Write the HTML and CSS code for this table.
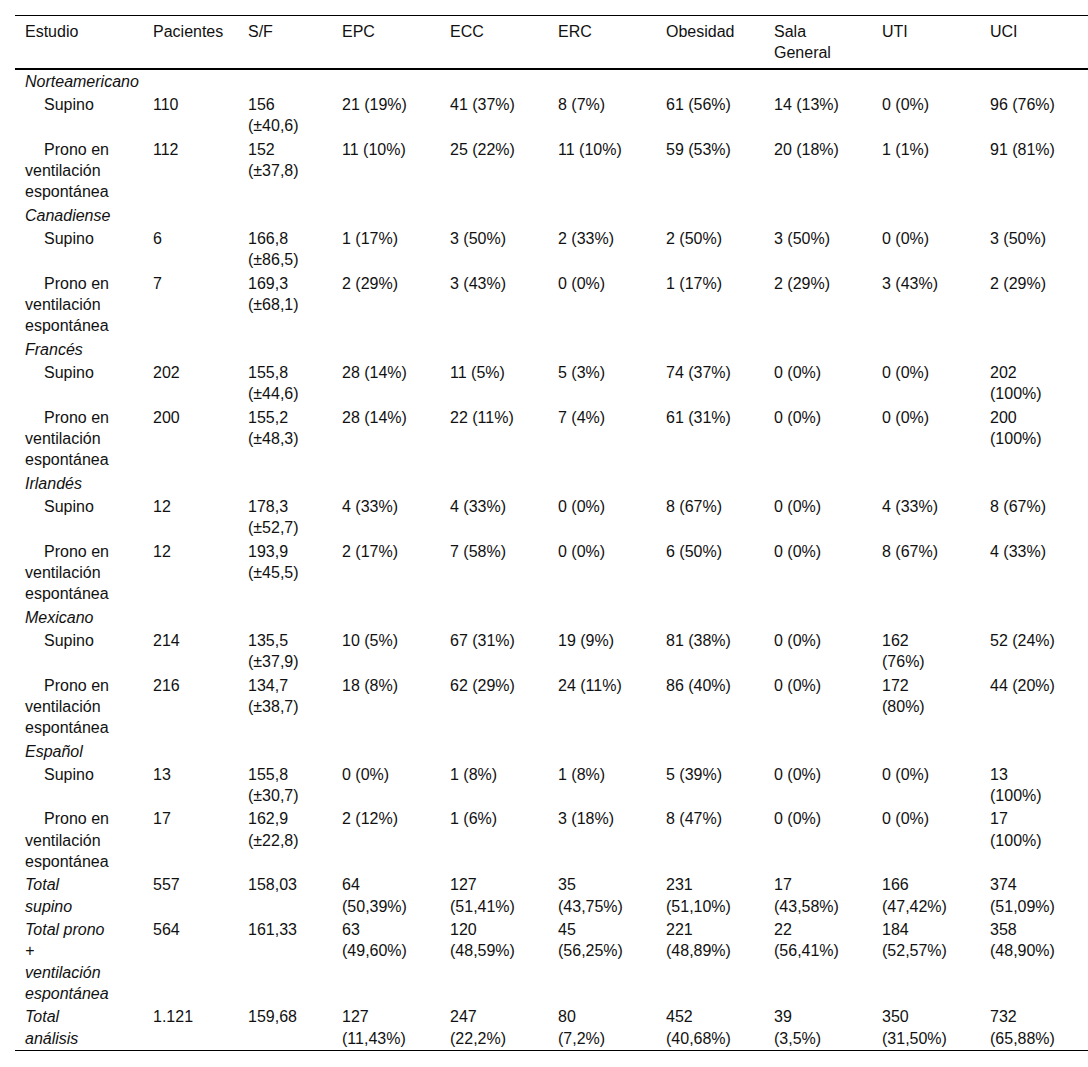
FILE: index.html
```html
<!DOCTYPE html>
<html lang="es">
<head>
<meta charset="utf-8">
<title>Tabla</title>
<link rel="stylesheet" href="styles.css">
</head>
<body>
<div class="wrap">
<table class="data">
<colgroup>
<col class="c1"><col class="c2"><col class="c3">
<col class="cw"><col class="cw"><col class="cw"><col class="cw"><col class="cw"><col class="cw"><col class="cw">
</colgroup>
<thead>
<tr><th>Estudio</th><th>Pacientes</th><th>S/F</th><th>EPC</th><th>ECC</th><th>ERC</th><th>Obesidad</th><th>Sala<br>General</th><th>UTI</th><th>UCI</th></tr>
</thead>
<tbody>
<tr><td class="grp" colspan="10">Norteamericano</td></tr>
<tr><td class="sub">Supino</td><td>110</td><td>156<br>(±40,6)</td><td>21 (19%)</td><td>41 (37%)</td><td>8 (7%)</td><td>61 (56%)</td><td>14 (13%)</td><td>0 (0%)</td><td>96 (76%)</td></tr>
<tr><td class="sub">Prono en<br>ventilación<br>espontánea</td><td>112</td><td>152<br>(±37,8)</td><td>11 (10%)</td><td>25 (22%)</td><td>11 (10%)</td><td>59 (53%)</td><td>20 (18%)</td><td>1 (1%)</td><td>91 (81%)</td></tr>
<tr><td class="grp" colspan="10">Canadiense</td></tr>
<tr><td class="sub">Supino</td><td>6</td><td>166,8<br>(±86,5)</td><td>1 (17%)</td><td>3 (50%)</td><td>2 (33%)</td><td>2 (50%)</td><td>3 (50%)</td><td>0 (0%)</td><td>3 (50%)</td></tr>
<tr><td class="sub">Prono en<br>ventilación<br>espontánea</td><td>7</td><td>169,3<br>(±68,1)</td><td>2 (29%)</td><td>3 (43%)</td><td>0 (0%)</td><td>1 (17%)</td><td>2 (29%)</td><td>3 (43%)</td><td>2 (29%)</td></tr>
<tr><td class="grp" colspan="10">Francés</td></tr>
<tr><td class="sub">Supino</td><td>202</td><td>155,8<br>(±44,6)</td><td>28 (14%)</td><td>11 (5%)</td><td>5 (3%)</td><td>74 (37%)</td><td>0 (0%)</td><td>0 (0%)</td><td>202<br>(100%)</td></tr>
<tr><td class="sub">Prono en<br>ventilación<br>espontánea</td><td>200</td><td>155,2<br>(±48,3)</td><td>28 (14%)</td><td>22 (11%)</td><td>7 (4%)</td><td>61 (31%)</td><td>0 (0%)</td><td>0 (0%)</td><td>200<br>(100%)</td></tr>
<tr><td class="grp" colspan="10">Irlandés</td></tr>
<tr><td class="sub">Supino</td><td>12</td><td>178,3<br>(±52,7)</td><td>4 (33%)</td><td>4 (33%)</td><td>0 (0%)</td><td>8 (67%)</td><td>0 (0%)</td><td>4 (33%)</td><td>8 (67%)</td></tr>
<tr><td class="sub">Prono en<br>ventilación<br>espontánea</td><td>12</td><td>193,9<br>(±45,5)</td><td>2 (17%)</td><td>7 (58%)</td><td>0 (0%)</td><td>6 (50%)</td><td>0 (0%)</td><td>8 (67%)</td><td>4 (33%)</td></tr>
<tr><td class="grp" colspan="10">Mexicano</td></tr>
<tr><td class="sub">Supino</td><td>214</td><td>135,5<br>(±37,9)</td><td>10 (5%)</td><td>67 (31%)</td><td>19 (9%)</td><td>81 (38%)</td><td>0 (0%)</td><td>162<br>(76%)</td><td>52 (24%)</td></tr>
<tr><td class="sub">Prono en<br>ventilación<br>espontánea</td><td>216</td><td>134,7<br>(±38,7)</td><td>18 (8%)</td><td>62 (29%)</td><td>24 (11%)</td><td>86 (40%)</td><td>0 (0%)</td><td>172<br>(80%)</td><td>44 (20%)</td></tr>
<tr><td class="grp" colspan="10">Español</td></tr>
<tr><td class="sub">Supino</td><td>13</td><td>155,8<br>(±30,7)</td><td>0 (0%)</td><td>1 (8%)</td><td>1 (8%)</td><td>5 (39%)</td><td>0 (0%)</td><td>0 (0%)</td><td>13<br>(100%)</td></tr>
<tr><td class="sub">Prono en<br>ventilación<br>espontánea</td><td>17</td><td>162,9<br>(±22,8)</td><td>2 (12%)</td><td>1 (6%)</td><td>3 (18%)</td><td>8 (47%)</td><td>0 (0%)</td><td>0 (0%)</td><td>17<br>(100%)</td></tr>
<tr><td class="tot">Total<br>supino</td><td>557</td><td>158,03</td><td>64<br>(50,39%)</td><td>127<br>(51,41%)</td><td>35<br>(43,75%)</td><td>231<br>(51,10%)</td><td>17<br>(43,58%)</td><td>166<br>(47,42%)</td><td>374<br>(51,09%)</td></tr>
<tr><td class="tot">Total prono<br>+<br>ventilación<br>espontánea</td><td>564</td><td>161,33</td><td>63<br>(49,60%)</td><td>120<br>(48,59%)</td><td>45<br>(56,25%)</td><td>221<br>(48,89%)</td><td>22<br>(56,41%)</td><td>184<br>(52,57%)</td><td>358<br>(48,90%)</td></tr>
<tr><td class="tot">Total<br>análisis</td><td>1.121</td><td>159,68</td><td>127<br>(11,43%)</td><td>247<br>(22,2%)</td><td>80<br>(7,2%)</td><td>452<br>(40,68%)</td><td>39<br>(3,5%)</td><td>350<br>(31,50%)</td><td>732<br>(65,88%)</td></tr>
</tbody>
</table>
</div>
</body>
</html>
```
FILE: styles.css
```css
html, body {
  margin: 0;
  padding: 0;
  background: #fff;
}

body {
  font-family: "Liberation Sans", Arial, sans-serif;
  font-size: 16px;
  color: #111;
}

.wrap {
  padding: 15px 0 0 15px;
}

.data {
  width: 1073px;
  table-layout: fixed;
  border-collapse: collapse;
  border-top: 1px solid #000;
  border-bottom: 1px solid #000;
}

.c1 { width: 128px; }
.c2 { width: 95px; }
.c3 { width: 94px; }
.cw { width: 108px; }

.data th {
  font-weight: normal;
  text-align: left;
  vertical-align: top;
  line-height: 21.33px;
  padding: 5px 10px 4px 10px;
  border-bottom: 2px solid #000;
}

.data td {
  text-align: left;
  vertical-align: top;
  line-height: 21.33px;
  padding: 1px 10px;
  white-space: nowrap;
}

.data td.grp,
.data td.tot {
  font-style: italic;
}

.data td.sub {
  text-indent: 19px;
}
```
